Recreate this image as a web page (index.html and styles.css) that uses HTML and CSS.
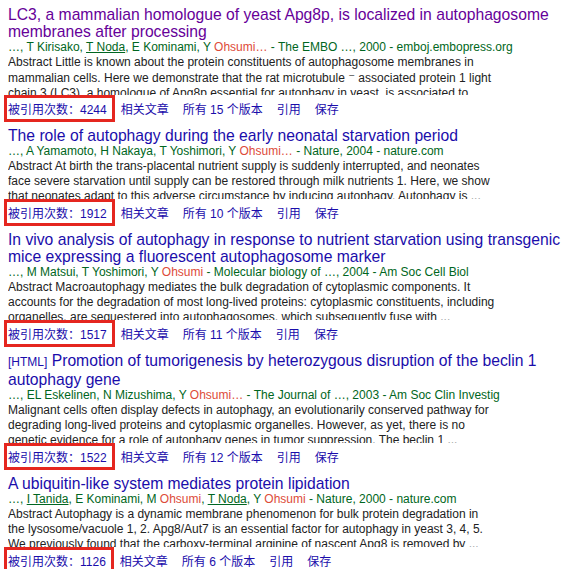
FILE: index.html
```html
<!DOCTYPE html>
<html lang="zh-CN">
<head>
<meta charset="utf-8">
<title>Scholar results</title>
<link rel="stylesheet" href="styles.css">
</head>
<body>
<div class="results">
  <div class="item">
    <h3 class="title"><a class="visited">LC3, a mammalian homologue of yeast Apg8p, is localized in autophagosome membranes after processing</a></h3>
    <div class="meta">…, T Kirisako, <a class="au">T Noda</a>, E Kominami, Y <span class="hl">Ohsumi…</span> - The EMBO …, 2000 - emboj.embopress.org</div>
    <div class="abs">Abstract Little is known about the protein constituents of autophagosome membranes in mammalian cells. Here we demonstrate that the rat microtubule <span class="dash">⁻</span> associated protein 1 light chain 3 (LC3), a homologue of Apg8p essential for autophagy in yeast, is associated to ...</div>
    <div class="links"><a class="cite">被引用次数：4244</a><a>相关文章</a><a>所有 15 个版本</a><a>引用</a><a>保存</a></div>
  </div>
  <div class="item">
    <h3 class="title"><a>The role of autophagy during the early neonatal starvation period</a></h3>
    <div class="meta">…, A Yamamoto, H Nakaya, T Yoshimori, Y <span class="hl">Ohsumi…</span> - Nature, 2004 - nature.com</div>
    <div class="abs">Abstract At birth the trans-placental nutrient supply is suddenly interrupted, and neonates face severe starvation until supply can be restored through milk nutrients 1. Here, we show that neonates adapt to this adverse circumstance by inducing autophagy. Autophagy is ...</div>
    <div class="links"><a class="cite">被引用次数：1912</a><a>相关文章</a><a>所有 10 个版本</a><a>引用</a><a>保存</a></div>
  </div>
  <div class="item">
    <h3 class="title"><a>In vivo analysis of autophagy in response to nutrient starvation using transgenic mice expressing a fluorescent autophagosome marker</a></h3>
    <div class="meta">…, M Matsui, T Yoshimori, Y <span class="hl">Ohsumi</span> - Molecular biology of …, 2004 - Am Soc Cell Biol</div>
    <div class="abs">Abstract Macroautophagy mediates the bulk degradation of cytoplasmic components. It accounts for the degradation of most long-lived proteins: cytoplasmic constituents, including organelles, are sequestered into autophagosomes, which subsequently fuse with ...</div>
    <div class="links"><a class="cite">被引用次数：1517</a><a>相关文章</a><a>所有 11 个版本</a><a>引用</a><a>保存</a></div>
  </div>
  <div class="item">
    <h3 class="title"><span class="ctg">[HTML]</span> <a>Promotion of tumorigenesis by heterozygous disruption of the beclin 1 autophagy gene</a></h3>
    <div class="meta">…, EL Eskelinen, N Mizushima, Y <span class="hl">Ohsumi…</span> - The Journal of …, 2003 - Am Soc Clin Investig</div>
    <div class="abs">Malignant cells often display defects in autophagy, an evolutionarily conserved pathway for degrading long-lived proteins and cytoplasmic organelles. However, as yet, there is no genetic evidence for a role of autophagy genes in tumor suppression. The beclin 1 ...</div>
    <div class="links"><a class="cite">被引用次数：1522</a><a>相关文章</a><a>所有 12 个版本</a><a>引用</a><a>保存</a></div>
  </div>
  <div class="item">
    <h3 class="title"><a>A ubiquitin-like system mediates protein lipidation</a></h3>
    <div class="meta">…, <a class="au">I Tanida</a>, E Kominami, M <span class="hl">Ohsumi</span>, <a class="au">T Noda</a>, Y <span class="hl">Ohsumi</span> - Nature, 2000 - nature.com</div>
    <div class="abs">Abstract Autophagy is a dynamic membrane phenomenon for bulk protein degradation in the lysosome/vacuole 1, 2. Apg8/Aut7 is an essential factor for autophagy in yeast 3, 4, 5. We previously found that the carboxy-terminal arginine of nascent Apg8 is removed by ...</div>
    <div class="links"><a class="cite">被引用次数：1126</a><a>相关文章</a><a>所有 6 个版本</a><a>引用</a><a>保存</a></div>
  </div>
</div>
</body>
</html>
```
FILE: styles.css
```css
html, body {
  margin: 0;
  padding: 0;
  background: #fff;
}
body {
  font-family: "Liberation Sans", Arial, "Noto Sans CJK SC", sans-serif;
  color: #222;
  overflow: hidden;
}
.results {
  padding: 6px 0 0 8px;
  width: 566px;
}
.item {
  margin-bottom: 5px;
}
.title {
  margin: 0;
  font-size: 15.7px;
  font-weight: normal;
  line-height: 17px;
  color: #1a0dab;
}
.title a {
  color: #1a0dab;
}
.title a.visited {
  color: #660099;
}
.ctg {
  font-size: 12px;
  color: #1a0dab;
}
.meta {
  font-size: 12px;
  line-height: 15px;
  color: #006621;
  white-space: nowrap;
}
.meta .au {
  color: #006621;
  text-decoration: underline;
}
.meta .hl {
  color: #dd4b39;
}
.abs {
  font-size: 12px;
  line-height: 15px;
  color: #222;
  width: 490px;
  height: 40px;
  overflow: hidden;
}
.dash {
  font-family: "DejaVu Sans", sans-serif;
  font-size: 13px;
}
.links {
  display: flex;
  gap: 14px;
  padding-top: 3px;
  height: 24px;
  line-height: 24px;
  font-size: 12px;
  background: #fff;
  position: relative;
}
.links a {
  display: block;
  color: #1a0dab;
  white-space: nowrap;
}
.links .cite {
  position: relative;
}
.links .cite::after {
  content: "";
  position: absolute;
  left: -4px;
  right: -8px;
  top: -3px;
  bottom: 0;
  border: 3px solid #e5261f;
}
```
